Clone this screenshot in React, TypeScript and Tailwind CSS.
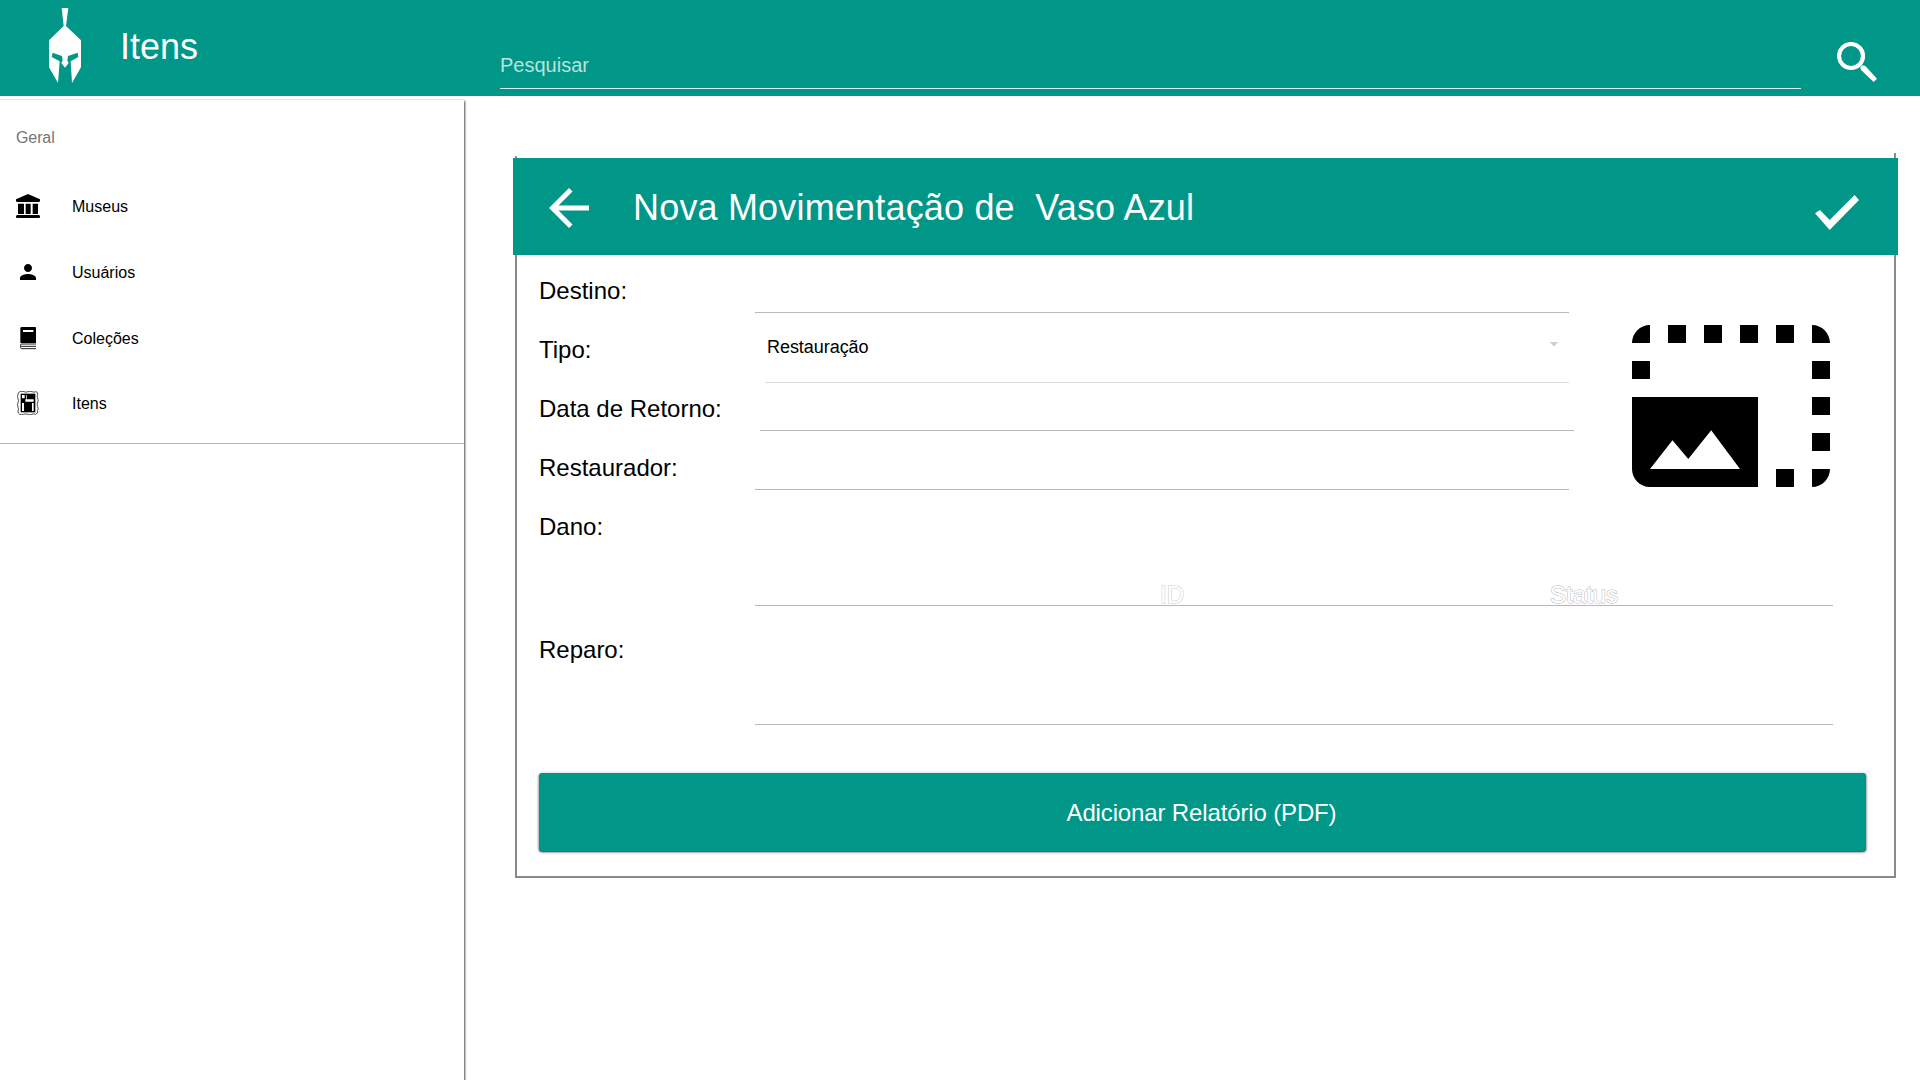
import type { ReactNode } from "react";

function HelmetLogo() {
  return (
    <svg viewBox="147 24 96 225" className="ml-[49px] mt-2 h-[75px] w-8 shrink-0" fill="#fff">
      <path d="M185 24h20l-7 54 45 43v81l-27 47-4-65 23-13-2-13-29 10-2 13 4 8-11 14-11-14 4-8-2-13-28-10-3 13 24 13-5 65-27-47v-81l44-43z" />
    </svg>
  );
}

function SearchIcon() {
  return (
    <svg viewBox="0 0 120 120" className="ml-9 mt-[42px] size-10 shrink-0">
      <circle cx="42" cy="42" r="36" fill="none" stroke="#fff" strokeWidth="12.5" />
      <path d="M70 76l6-6 9 2 35 38-10 10-38-36z" fill="#fff" />
    </svg>
  );
}

function MuseumIcon() {
  return (
    <svg viewBox="0 0 72 72" className="size-6">
      <path d="M36 0l36 16v6l-3 2H3l-3-2v-6zM6 29h18v31H6zM29 29h15v31H29zM50 29h16v31H50zM3 63h66l3 3v4l-2 2H2l-2-2v-4z" />
    </svg>
  );
}

function PersonIcon() {
  return (
    <svg viewBox="0 0 24 24" className="size-6">
      <path d="M12 12c2.21 0 4-1.79 4-4s-1.79-4-4-4-4 1.79-4 4 1.79 4 4 4zm0 2c-2.67 0-8 1.34-8 4v2h16v-2c0-2.66-5.33-4-8-4z" />
    </svg>
  );
}

function BookIcon() {
  return (
    <svg viewBox="0 0 72 72" className="size-6">
      <path d="M17 3h40q3 0 3 3v45H13V7q0-4 4-4z" />
      <path d="M21 12h31v6H21z" fill="#fff" />
      <path d="M60 54H17q-3 0-3 3v7q0 4 3 4h43M16 61h44" fill="none" stroke="#000" strokeWidth="2.6" />
    </svg>
  );
}

function ItemsIcon() {
  return (
    <svg viewBox="0 0 72 72" className="size-6">
      <path
        d="M12 2q6-3 12 0 6 3 12 0 6-3 12 0 6 3 12 0 6 2 5 8-3 6 0 12 3 6 0 13-3 6 0 12 3 6 0 12 2 8-6 11-6-3-12 0-6 3-12 0-6-3-12 0-6 3-12 0-6-3-5-10 3-6 0-12-3-6 0-13 3-6 0-12-3-6 0-12-1-6 6-9z"
        fill="none"
        stroke="#222"
        strokeWidth="2.4"
      />
      <path d="M14 8h44v56H14z" />
      <path d="M18 12h8v10h-8zM28 25h25v7H28zM18 36h6v24h-6zM48 36h5v24h-5zM30 12h2v13h-2z" fill="#fff" />
    </svg>
  );
}

function PhotoIcon() {
  return (
    <svg viewBox="0 0 24 24" className="ml-[49px] mt-[37px] size-[216px] shrink-0">
      <path d="M3 3v2H1c0-1.1.9-2 2-2zM5 3h2v2H5zM9 3h2v2H9zM13 3h2v2h-2zM17 3h2v2h-2zM21 3c1.1 0 2 .9 2 2h-2zM1 7h2v2H1zM21 7h2v2h-2zM21 11h2v2h-2zM21 15h2v2h-2zM17 19h2v2h-2zM21 19h2c0 1.1-.9 2-2 2zM1 11h14v10H3c-1.1 0-2-.9-2-2z" />
      <path d="M3 19l2.5-3.2 1.75 2.1 2.55-3.2L13 19z" fill="#fff" />
    </svg>
  );
}

function NavItem({ icon, label }: { icon: ReactNode; label: string }) {
  return (
    <li className="flex h-[66px] items-center gap-8 pl-4 text-base last:h-16">
      {icon}
      <span className="pt-0.5">{label}</span>
    </li>
  );
}

function FormRow({ label, className, children }: { label: string; className?: string; children: ReactNode }) {
  return (
    <div className={`flex items-start ${className ?? "h-[59px]"}`}>
      <label className="w-[216px] shrink-0 whitespace-nowrap text-2xl leading-[59px]">{label}</label>
      {children}
    </div>
  );
}

export default function App() {
  return (
    <div className="flex h-[1080px] w-[1920px] flex-col overflow-hidden bg-white font-['Liberation_Sans',Arial,sans-serif] text-black">
      <header className="flex h-24 shrink-0 items-start bg-[#009688] text-white">
        <HelmetLogo />
        <h1 className="ml-[39px] mt-[27px] w-[380px] text-4xl leading-10">Itens</h1>
        <div className="mt-[42px] h-[47px] w-[1301px] border-b border-[#d9efed] text-xl leading-[46px] text-[#b9e2de]">
          Pesquisar
        </div>
        <SearchIcon />
      </header>

      <div className="flex min-h-0 flex-1">
        <aside className="mt-[3px] w-[464px] shrink-0 border-t border-[#e2e2e2] shadow-[1px_2px_2px_rgba(0,0,0,0.7)]">
          <div className="h-[73px] pl-4 pt-[26px] text-base tracking-[-0.1px] text-[#757575]">Geral</div>
          <ul className="h-[271px] border-b border-[#b5b5b5]">
            <NavItem icon={<MuseumIcon />} label="Museus" />
            <NavItem icon={<PersonIcon />} label="Usuários" />
            <NavItem icon={<BookIcon />} label="Coleções" />
            <NavItem icon={<ItemsIcon />} label="Itens" />
          </ul>
        </aside>

        <main className="ml-[49px] mt-[57px] w-[1385px]">
          <div className="flex h-[5px] justify-between px-0.5">
            <div className="mt-[3px] w-0.5 bg-[#8a8a8c]" />
            <div className="w-0.5 bg-[#8a8a8c]" />
          </div>
          <div className="flex h-[97px] items-start bg-[#009688] text-white">
            <svg viewBox="4 4 16 16" className="ml-9 mt-[30px] size-10" fill="#fff">
              <path d="M20 11H7.83l5.59-5.59L12 4l-8 8 8 8 1.41-1.41L7.83 13H20v-2z" />
            </svg>
            <h2 className="ml-11 mt-[30px] whitespace-pre text-4xl leading-10 tracking-[0.18px]">
              {"Nova Movimentação de  Vaso Azul"}
            </h2>
            <svg viewBox="0 0 132 105" className="ml-auto mr-[39px] mt-[37px] h-[35px] w-11" fill="#fff">
              <path d="M0 55l15-10 29 30L119 0l13 15-88 90z" />
            </svg>
          </div>

          <section className="mx-0.5 h-[623px] border-x-2 border-b-2 border-[#8a8a8c] pl-[22px] pt-1.5">
            <div className="flex h-[236px] items-start">
              <div className="w-[1035px] shrink-0">
                <FormRow label="Destino:">
                  <div className="h-[52px] w-[814px] border-b border-[#b8b8b8]" />
                </FormRow>
                <FormRow label="Tipo:">
                  <div className="ml-[10px] flex h-[63px] w-[804px] items-start border-b border-[#dedede]">
                    <span className="ml-0.5 mt-3.5 text-lg leading-[26px] tracking-[-0.05px]">Restauração</span>
                    <svg viewBox="0 0 10 5" className="ml-auto mr-[10px] mt-[22px] h-[5px] w-2.5" fill="#d0d0d0">
                      <path d="M0.5 0h9L5 4.5z" />
                    </svg>
                  </div>
                </FormRow>
                <FormRow label="Data de Retorno:">
                  <div className="ml-[5px] h-[52px] w-[814px] border-b border-[#b8b8b8]" />
                </FormRow>
                <FormRow label="Restaurador:">
                  <div className="h-[52px] w-[814px] border-b border-[#b8b8b8]" />
                </FormRow>
              </div>
              <PhotoIcon />
            </div>
            <FormRow label="Dano:" className="h-[123px]">
              <div className="flex h-[109px] w-[1078px] items-end border-b border-[#b8b8b8] text-2xl leading-5 text-white">
                <span className="ml-[405px] w-[390px] [-webkit-text-stroke:1px_#c8c8c8] [paint-order:stroke]">ID</span>
                <span className="[-webkit-text-stroke:1px_#b8b8b8] [paint-order:stroke]">Status</span>
              </div>
            </FormRow>
            <FormRow label="Reparo:" className="h-[153px]">
              <div className="h-[105px] w-[1078px] border-b border-[#b8b8b8]" />
            </FormRow>
            <button className="h-[78px] w-[1327px] rounded-[3px] bg-[#009688] pr-0.5 pt-0.5 text-2xl tracking-[-0.14px] text-white shadow-[0_1px_3px_rgba(0,0,0,0.65),0_1px_1px_rgba(0,0,0,0.4)]">
              Adicionar Relatório (PDF)
            </button>
          </section>
        </main>
      </div>
    </div>
  );
}
